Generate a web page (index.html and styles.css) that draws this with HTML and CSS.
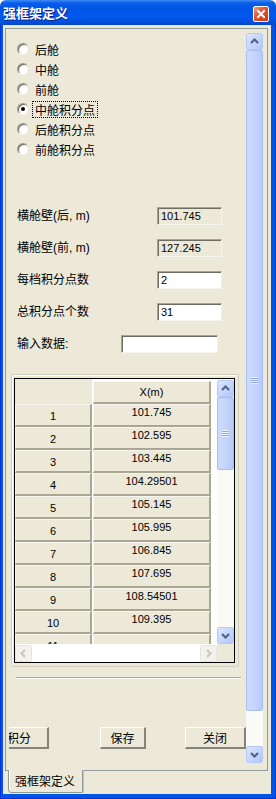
FILE: index.html
```html
<!DOCTYPE html>
<html lang="zh-CN">
<head>
    <meta charset="UTF-8">
    <meta name="viewport" content="width=device-width, initial-scale=1.0">
    <title>强框架定义</title>
    <link rel="stylesheet" href="styles.css">
</head>
<body>
<div id="window">
    <div id="titlebar">
        <span id="title">强框架定义</span>
        <span id="close">
            <svg viewBox="0 0 14 14" width="14" height="14">
                <path d="M4 4 L10 10 M10 4 L4 10" stroke="#fff" stroke-width="2" stroke-linecap="square"/>
            </svg>
        </span>
    </div>

    <div id="frame">
        <div id="client">
            <div id="page">
                <div id="viewport">
                    <!-- 位置选择 -->
                    <div class="radios">
                        <div class="radio"><span class="dot"></span><span class="rtext">后舱</span></div>
                        <div class="radio"><span class="dot"></span><span class="rtext">中舱</span></div>
                        <div class="radio"><span class="dot"></span><span class="rtext">前舱</span></div>
                        <div class="radio"><span class="dot on"></span><span class="rtext focus">中舱积分点</span></div>
                        <div class="radio"><span class="dot"></span><span class="rtext">后舱积分点</span></div>
                        <div class="radio"><span class="dot"></span><span class="rtext">前舱积分点</span></div>
                    </div>

                    <div class="fields">
                        <div class="row"><span class="label">横舱壁(后, m)</span><span class="edit readonly">101.745</span></div>
                        <div class="row"><span class="label">横舱壁(前, m)</span><span class="edit readonly">127.245</span></div>
                        <div class="row"><span class="label">每档积分点数</span><span class="edit">2</span></div>
                        <div class="row"><span class="label">总积分点个数</span><span class="edit">31</span></div>
                        <div class="row"><span class="label short">输入数据:</span><span class="edit wide"></span></div>
                    </div>

                    <div class="group">
                        <div class="grid">
                            <div class="grid-top">
                                <div class="cells">
                                    <div class="grow head"><div class="corner"></div><div class="hcell">X(m)</div></div>
                                    <div class="grow"><div class="rh">1</div><div class="dc">101.745</div></div>
                                    <div class="grow"><div class="rh">2</div><div class="dc">102.595</div></div>
                                    <div class="grow"><div class="rh">3</div><div class="dc">103.445</div></div>
                                    <div class="grow"><div class="rh">4</div><div class="dc">104.29501</div></div>
                                    <div class="grow"><div class="rh">5</div><div class="dc">105.145</div></div>
                                    <div class="grow"><div class="rh">6</div><div class="dc">105.995</div></div>
                                    <div class="grow"><div class="rh">7</div><div class="dc">106.845</div></div>
                                    <div class="grow"><div class="rh">8</div><div class="dc">107.695</div></div>
                                    <div class="grow"><div class="rh">9</div><div class="dc">108.54501</div></div>
                                    <div class="grow"><div class="rh">10</div><div class="dc">109.395</div></div>
                                    <div class="grow"><div class="rh">11</div><div class="dc"></div></div>
                                </div>
                                <div class="vscroll small">
                                    <div class="sbtn"><svg viewBox="0 0 15 15" width="15" height="15"><polyline points="4,9 7.5,5.5 11,9" fill="none" stroke="#4D6185" stroke-width="2"/></svg></div>
                                    <div class="thumb t-small"><span class="grip"></span></div>
                                    <div class="track"></div>
                                    <div class="sbtn"><svg viewBox="0 0 15 15" width="15" height="15"><polyline points="4,6 7.5,9.5 11,6" fill="none" stroke="#4D6185" stroke-width="2"/></svg></div>
                                </div>
                            </div>
                            <div class="grid-bottom">
                                <div class="hscroll">
                                    <div class="sbtn off"><svg viewBox="0 0 15 15" width="15" height="15"><polyline points="9,4 5.5,7.5 9,11" fill="none" stroke="#C9C7BA" stroke-width="2"/></svg></div>
                                    <div class="htrack"></div>
                                    <div class="sbtn off"><svg viewBox="0 0 15 15" width="15" height="15"><polyline points="6,4 9.5,7.5 6,11" fill="none" stroke="#C9C7BA" stroke-width="2"/></svg></div>
                                </div>
                                <div class="sizebox"></div>
                            </div>
                        </div>
                    </div>

                    <div class="sep"></div>

                    <div class="buttons">
                        <button class="btn first">积分</button>
                        <button class="btn save">保存</button>
                        <button class="btn close-btn">关闭</button>
                    </div>
                </div>

                <div class="vscroll main">
                    <div class="sbtn"><svg viewBox="0 0 15 15" width="15" height="15"><polyline points="4,9 7.5,5.5 11,9" fill="none" stroke="#4D6185" stroke-width="2"/></svg></div>
                    <div class="thumb t-main"><span class="grip"></span></div>
                    <div class="track"></div>
                    <div class="sbtn"><svg viewBox="0 0 15 15" width="15" height="15"><polyline points="4,6 7.5,9.5 11,6" fill="none" stroke="#4D6185" stroke-width="2"/></svg></div>
                </div>
            </div>

            <div id="tabs">
                <div class="tab">强框架定义</div>
            </div>
        </div>
    </div>
</div>
</body>
</html>
```

FILE: styles.css
```css
body {
    margin: 0;
    background: #fff;
    font-family: "Liberation Sans", "Noto Sans CJK SC", sans-serif;
    font-size: 12px;
    color: #000;
}

#window {
    width: 276px;
    height: 799px;
    display: flex;
    flex-direction: column;
}

#titlebar {
    height: 25px;
    flex: none;
    display: flex;
    align-items: center;
    justify-content: space-between;
    background: linear-gradient(#3F8CF3 0, #0A5EEA 3px, #0055E5 8px, #0058EE 17px, #0050DD 22px, #0046C8 25px);
    border-radius: 6px 6px 0 0;
}

#title {
    padding-left: 3px;
    color: #fff;
    font-family: "Noto Sans CJK SC", sans-serif;
    font-weight: bold;
    font-size: 13px;
    line-height: 16px;
    text-shadow: 1px 1px #0F1E89;
}

#close {
    width: 14px;
    height: 14px;
    margin: 2px 7px 0 0;
    background: linear-gradient(135deg, #F29B83, #E0502B 45%, #C83A18);
    border: 1px solid #fff;
    border-radius: 2px;
    display: flex;
}

#frame {
    flex: 1;
    background: #0055E5;
    padding: 0 5px 5px 3px;
    box-shadow: inset -1px -1px #0831D9, inset 1px 0 #0831D9;
}

#client {
    height: 100%;
    background: #ECE9D8;
    display: flex;
    flex-direction: column;
}

#page {
    margin: 3px 0 0 2px;
    width: 263px;
    height: 743px;
    box-sizing: border-box;
    border: 1px solid #919B9C;
    padding: 4px 4px 7px 3px;
    display: flex;
}

#viewport {
    width: 237px;
    height: 730px;
    overflow: hidden;
    flex: none;
}

/* radio list */
.radios {
    padding-top: 6px;
}

.radio {
    height: 20px;
    display: flex;
    align-items: center;
    padding-left: 8px;
}

.dot {
    width: 12px;
    height: 12px;
    box-sizing: border-box;
    border-radius: 50%;
    background: radial-gradient(circle at 60% 60%, #fff 40%, #E4E2D8 100%);
    border: 1px solid;
    border-color: #9C9A8E #E8E6DD #F4F3EE #9C9A8E;
    box-shadow: inset 1px 1px #6E6C62;
    margin-right: 4px;
    position: relative;
    flex: none;
}

.dot.on::after {
    content: '';
    position: absolute;
    left: 3px;
    top: 3px;
    width: 4px;
    height: 4px;
    border-radius: 50%;
    background: #000;
}

.rtext {
    padding: 0 2px;
    line-height: 15px;
    font-family: "Noto Sans CJK SC", sans-serif;
}

.rtext.focus {
    outline: 1px dotted #000;
}

/* edit rows */
.fields {
    margin-top: 48px;
    display: flex;
    flex-direction: column;
    gap: 14px;
}

.row {
    height: 18px;
    display: flex;
    align-items: center;
}

.label {
    width: 148px;
    padding-left: 8px;
    box-sizing: border-box;
    line-height: 18px;
}

.label.short {
    width: 112px;
}

.edit {
    width: 65px;
    height: 18px;
    box-sizing: border-box;
    background: #fff;
    border: 1px solid;
    border-color: #A7A595 #F3F2EC #F3F2EC #A7A595;
    box-shadow: inset 1px 1px #6F6D63;
    padding-left: 3px;
    font-size: 11px;
    line-height: 16px;
}

.edit.readonly {
    background: #ECE9D8;
}

.edit.wide {
    width: 97px;
}

/* grid */
.group {
    margin: 21px 0 0 2px;
    width: 228px;
    height: 293px;
    box-sizing: border-box;
    border: 1px solid #D0CEBF;
    box-shadow: inset 1px 1px #fff;
    border-radius: 2px;
    padding: 3px 3px 3px 2px;
}

.grid {
    width: 221px;
    height: 285px;
    box-sizing: border-box;
    border: 1px solid #000;
    background: #fff;
    display: flex;
    flex-direction: column;
}

.grid-top {
    display: flex;
    height: 265px;
}

.cells {
    width: 202px;
    height: 265px;
    overflow: hidden;
    background: #fff;
}

.grow {
    display: flex;
    height: 23px;
    font-size: 11px;
}

.grow.head {
    height: 25px;
}

.corner {
    width: 77px;
    background: #ECE9D8;
}

.rh, .dc, .hcell {
    box-sizing: border-box;
    background: #ECE9D8;
    border-top: 1px solid #F7F6F0;
    border-left: 1px solid #F7F6F0;
    border-right: 2px solid #A9A692;
    border-bottom: 2px solid #A9A692;
    display: flex;
    justify-content: center;
    align-items: center;
}

.rh {
    width: 77px;
    padding-top: 1px;
}

.dc {
    width: 118px;
    margin-left: 1px;
    padding-bottom: 6px;
}

.hcell {
    width: 118px;
    margin: 2px 0 0 1px;
}

.vscroll {
    width: 17px;
    display: flex;
    flex-direction: column;
    background: #FAFAF6;
    flex: none;
}

.vscroll.small {
    height: 265px;
    box-sizing: border-box;
    padding-top: 1px;
}

.vscroll.main {
    height: 730px;
}

.sbtn {
    width: 15px;
    height: 15px;
    flex: none;
    border: 1px solid #B6C9F6;
    border-radius: 2px;
    background: linear-gradient(135deg, #DCE6FD, #C2D3FC 60%, #B2C6F6);
    display: flex;
}

.sbtn.off {
    border-color: #E8E6DC;
    background: #F3F2EC;
}

.thumb {
    flex: none;
    box-sizing: border-box;
    border: 1px solid #A8BEF3;
    border-radius: 2px;
    background: linear-gradient(90deg, #CEDBFD, #C2D3FC 60%, #B7CAF8);
    display: flex;
    align-items: center;
    justify-content: center;
}

.t-main {
    height: 661px;
}

.t-small {
    height: 73px;
}

.grip {
    width: 7px;
    height: 7px;
    background: repeating-linear-gradient(#EEF4FE 0, #EEF4FE 1px, #8CA8EC 1px, #8CA8EC 2px);
}

.track {
    flex: 1;
}

.grid-bottom {
    display: flex;
    height: 18px;
}

.hscroll {
    width: 202px;
    display: flex;
    background: #fff;
    padding-top: 1px;
}

.htrack {
    flex: 1;
}

.sizebox {
    flex: 1;
    background: #ECE9D8;
}

.sep {
    margin: 10px 0 0 7px;
    width: 225px;
    height: 1px;
    background: #ACA899;
    border-bottom: 1px solid #fff;
}

/* buttons */
.buttons {
    margin-top: 48px;
    height: 22px;
    display: flex;
}

.btn {
    height: 22px;
    box-sizing: border-box;
    background: #ECE9D8;
    border: none;
    border-top: 1px solid #fff;
    border-left: 1px solid #fff;
    border-right: 2px solid #85837A;
    border-bottom: 2px solid #85837A;
    font-family: "Noto Sans CJK SC", sans-serif;
    font-size: 12px;
    line-height: 16px;
    padding: 0;
    color: #000;
}

.btn.first {
    width: 60px;
    margin-left: -19px;
}

.btn.save {
    width: 47px;
    margin-left: 51px;
}

.btn.close-btn {
    width: 61px;
    margin-left: 39px;
    flex: none;
}

/* bottom tab */
#tabs {
    height: 23px;
    padding-left: 5px;
}

.tab {
    width: 75px;
    height: 23px;
    margin-top: -1px;
    box-sizing: border-box;
    background: #ECE9D8;
    border: 1px solid #919B9C;
    border-top: none;
    border-radius: 0 0 2px 4px;
    box-shadow: inset 1px 0 #fff, 1px 0 #C5C2B2;
    font-family: "Noto Sans CJK SC", sans-serif;
    font-size: 12px;
    line-height: 18px;
    padding: 2px 0 0 6px;
}
```
